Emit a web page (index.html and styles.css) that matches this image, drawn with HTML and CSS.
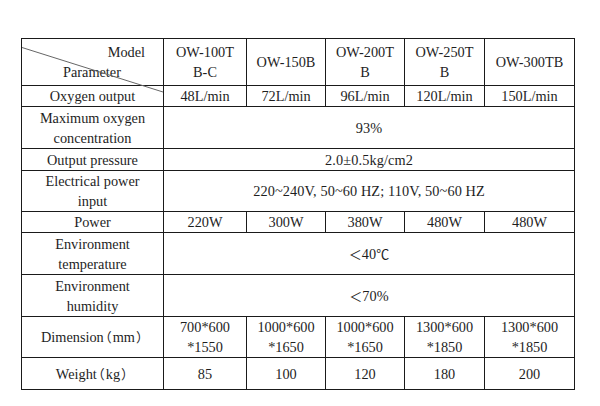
FILE: index.html
```html
<!DOCTYPE html>
<html>
	<head>
	<meta charset="utf-8">
	<link rel="stylesheet" href="styles.css">
	</head>

	<body>
		<div class="sheet">
			<svg class="slash" width="150" height="60" viewBox="0 0 150 60">
				<line x1="0" y1="8.5" x2="141" y2="53" stroke="#666" stroke-width="1"></line>
			</svg>

			<table class="spec">
				<colgroup>
					<col class="c-param">
					<col class="c-1">
					<col class="c-2">
					<col class="c-3">
					<col class="c-4">
					<col class="c-5">
				</colgroup>

				<tr class="r-head">
					<td class="corner">
						<div class="model">Model</div>
						<div class="param">Parameter</div>
					</td>
					<td>OW-100T<br>B-C</td>
					<td>OW-150B</td>
					<td>OW-200T<br>B</td>
					<td>OW-250T<br>B</td>
					<td>OW-300TB</td>
				</tr>

				<tr class="r-21">
					<td>Oxygen output</td>
					<td>48L/min</td>
					<td>72L/min</td>
					<td>96L/min</td>
					<td>120L/min</td>
					<td>150L/min</td>
				</tr>

				<tr class="r-42">
					<td>Maximum oxygen<br>concentration</td>
					<td colspan="5" class="span">93%</td>
				</tr>

				<tr class="r-22">
					<td>Output pressure</td>
					<td colspan="5" class="span">2.0±0.5kg/cm2</td>
				</tr>

				<tr class="r-40">
					<td>Electrical power<br>input</td>
					<td colspan="5" class="span">220~240V, 50~60 HZ; 110V, 50~60 HZ</td>
				</tr>

				<tr class="r-21">
					<td>Power</td>
					<td>220W</td>
					<td>300W</td>
					<td>380W</td>
					<td>480W</td>
					<td>480W</td>
				</tr>

				<tr class="r-42">
					<td>Environment<br>temperature</td>
					<td colspan="5" class="span"><span class="wide">＜</span>40<span class="wide">℃</span></td>
				</tr>

				<tr class="r-42">
					<td>Environment<br>humidity</td>
					<td colspan="5" class="span"><span class="wide">＜</span>70%</td>
				</tr>

				<tr class="r-41">
					<td>Dimension<span class="paren-l">（</span>mm<span class="paren-r">）</span></td>
					<td>700*600<br>*1550</td>
					<td>1000*600<br>*1650</td>
					<td>1000*600<br>*1650</td>
					<td>1300*600<br>*1850</td>
					<td>1300*600<br>*1850</td>
				</tr>

				<tr class="r-32">
					<td>Weight<span class="paren-l">（</span>kg<span class="paren-r">）</span></td>
					<td>85</td>
					<td>100</td>
					<td>120</td>
					<td>180</td>
					<td>200</td>
				</tr>
			</table>
		</div>
	</body>
</html>
```

FILE: styles.css
```css
body, html {
	margin: 0;
	padding: 0;
	background: #fff;
}

body {
	padding: 38px 0 0 21px;
}

.sheet {
	position: relative;
	width: 554px;
}

.slash {
	position: absolute;
	left: 1px;
	top: 1px;
	z-index: 2;
	pointer-events: none;
}

.spec {
	border-collapse: collapse;
	table-layout: fixed;
	width: 554px;
	font-family: "Liberation Serif", "Times New Roman", "Noto Sans CJK SC", serif;
	font-size: 14.3px;
	line-height: 20px;
	color: #1e1e1e;
	-webkit-font-smoothing: antialiased;
}

.spec td {
	border: 1px solid #1a1a1a;
	padding: 0;
	text-align: center;
	vertical-align: middle;
	white-space: nowrap;
}

.c-param { width: 142px; }
.c-1 { width: 83px; }
.c-2 { width: 79px; }
.c-3 { width: 79px; }
.c-4 { width: 80px; }
.c-5 { width: 90px; }

.r-head { height: 47px; }
.r-21 { height: 21px; }
.r-22 { height: 22px; }
.r-40 { height: 40px; }
.r-41 { height: 41px; }
.r-42 { height: 42px; }
.r-32 { height: 32px; }

.corner .model {
	text-align: right;
	padding-right: 18px;
}

.corner .param {
	text-align: left;
	padding-left: 41px;
}

.span {
	letter-spacing: 0.1px;
}

.wide {
	font-family: "Noto Sans CJK SC", sans-serif;
	font-size: 13px;
}

/* full-width brackets: trim the empty half of each glyph box */
.paren-l,
.paren-r {
	font-family: "Noto Sans CJK SC", sans-serif;
	font-size: 13px;
}

.paren-l {
	margin-left: -5px;
	margin-right: 1px;
}

.paren-r {
	margin-left: 1px;
	margin-right: -5px;
}
```
